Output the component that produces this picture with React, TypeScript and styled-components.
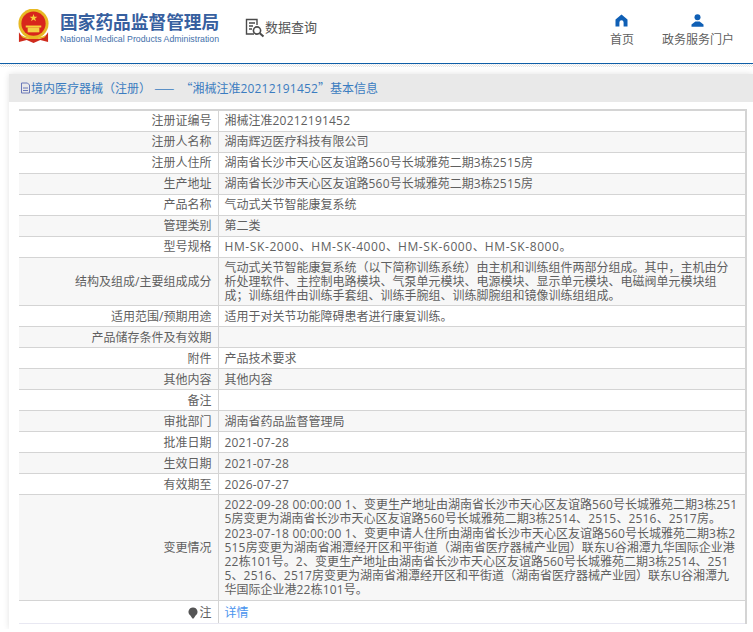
import React from "react";
import styled, { createGlobalStyle } from "styled-components";

const GlobalStyle = createGlobalStyle`
  html, body {
    margin: 0;
    padding: 0;
    background: #fff;
  }
  body {
    font-family: "Open Sans", "Noto Sans CJK SC", sans-serif;
    font-size: 12px;
    color: #5f5f5f;
    overflow: hidden;
  }
  * {
    box-sizing: border-box;
  }
`;

interface RowItem {
  label: string;
  value?: string;
  lines?: string[];
  wide?: boolean;
}

const rows: RowItem[] = [
  { label: "注册证编号", value: "湘械注准20212191452" },
  { label: "注册人名称", value: "湖南辉迈医疗科技有限公司" },
  { label: "注册人住所", value: "湖南省长沙市天心区友谊路560号长城雅苑二期3栋2515房" },
  { label: "生产地址", value: "湖南省长沙市天心区友谊路560号长城雅苑二期3栋2515房" },
  { label: "产品名称", value: "气动式关节智能康复系统" },
  { label: "管理类别", value: "第二类" },
  { label: "型号规格", value: "HM-SK-2000、HM-SK-4000、HM-SK-6000、HM-SK-8000。", wide: true },
  {
    label: "结构及组成/主要组成成分",
    lines: [
      "气动式关节智能康复系统（以下简称训练系统）由主机和训练组件两部分组成。其中，主机由分",
      "析处理软件、主控制电路模块、气泵单元模块、电源模块、显示单元模块、电磁阀单元模块组",
      "成；训练组件由训练手套组、训练手腕组、训练脚腕组和镜像训练组组成。",
    ],
  },
  { label: "适用范围/预期用途", value: "适用于对关节功能障碍患者进行康复训练。" },
  { label: "产品储存条件及有效期" },
  { label: "附件", value: "产品技术要求" },
  { label: "其他内容", value: "其他内容" },
  { label: "备注" },
  { label: "审批部门", value: "湖南省药品监督管理局" },
  { label: "批准日期", value: "2021-07-28" },
  { label: "生效日期", value: "2021-07-28" },
  { label: "有效期至", value: "2026-07-27" },
  {
    label: "变更情况",
    lines: [
      "2022-09-28 00:00:00 1、变更生产地址由湖南省长沙市天心区友谊路560号长城雅苑二期3栋251",
      "5房变更为湖南省长沙市天心区友谊路560号长城雅苑二期3栋2514、2515、2516、2517房。",
      "2023-07-18 00:00:00 1、变更申请人住所由湖南省长沙市天心区友谊路560号长城雅苑二期3栋2",
      "515房变更为湖南省湘潭经开区和平街道（湖南省医疗器械产业园）联东U谷湘潭九华国际企业港",
      "22栋101号。2、变更生产地址由湖南省长沙市天心区友谊路560号长城雅苑二期3栋2514、251",
      "5、2516、2517房变更为湖南省湘潭经开区和平街道（湖南省医疗器械产业园）联东U谷湘潭九",
      "华国际企业港22栋101号。",
    ],
  },
];

// latin runs come out a little narrow next to the cjk font, so they get their own spacing
function spaced(text: string, wide?: boolean) {
  return text.split(/([0-9A-Za-z:\- ]+)/).map((part, i) =>
    i % 2 === 1 ? (
      <Latin key={i} $wide={wide}>
        {part}
      </Latin>
    ) : (
      part
    )
  );
}

export default function App() {
  return (
    <>
      <GlobalStyle />
      <Header>
        <Brand>
          <Emblem viewBox="0 0 34 36">
            <circle cx="17" cy="15" r="15.5" fill="#e8b923" />
            <circle cx="17" cy="15" r="12.5" fill="#d8261c" />
            <polygon points="17,5 18,8 21,8 18.6,9.8 19.5,12.6 17,10.9 14.5,12.6 15.4,9.8 13,8 16,8" fill="#f6d33a" />
            <rect x="9" y="17" width="16" height="2" fill="#f6d33a" />
            <rect x="11" y="19" width="12" height="5" fill="#f3d046" />
            <path d="M2 24 C6 31 12 31 17 31 C22 31 28 31 32 24 L32 34 L24 32 L17 35 L10 32 L2 34 Z" fill="#cf2b1d" />
            <path d="M5 28 C9 31 25 31 29 28" stroke="#e8b923" strokeWidth="1.5" fill="none" />
          </Emblem>
          <BrandText>
            <BrandName>国家药品监督管理局</BrandName>
            <BrandSub>National Medical Products Administration</BrandSub>
          </BrandText>
        </Brand>
        <QueryLink>
          <svg width="20" height="20" viewBox="0 0 20 20" fill="none" stroke="#4a4a4a" strokeWidth="1.4">
            <path d="M9 16H1.5V1.5H12V7" />
            <path d="M4 5h6M4 8h4M4 11h3" />
            <circle cx="12" cy="12.5" r="3.6" strokeWidth="1.6" />
            <path d="M14.8 15.2L18.5 18.6" strokeWidth="2" />
          </svg>
          <span>数据查询</span>
        </QueryLink>
        <Nav>
          <NavItem>
            <svg width="13" height="13" viewBox="0 0 13 13" fill="#0f5fb5">
              <path d="M6.5 0.5L12.5 5.5V12.5H8.6V8.4a2.1 2.1 0 0 0-4.2 0V12.5H0.5V5.5Z" />
            </svg>
            首页
          </NavItem>
          <NavItem>
            <svg width="13" height="13" viewBox="0 0 13 13" fill="#0f5fb5">
              <circle cx="6.5" cy="3.2" r="3" />
              <path d="M0.5 12.8V10.4L4.4 7.6H8.6L12.5 10.4V12.8Z" />
            </svg>
            政务服务门户
          </NavItem>
        </Nav>
      </Header>
      <Strip />
      <Panel>
        <PanelTitle>
          <svg width="11" height="12" viewBox="0 0 11 12" fill="none" stroke="#6a78b8" strokeWidth="1">
            <path d="M1.5 1H7.5L9.5 3V11H1.5Z" />
            <path d="M3 6h5M3 8.5h5" />
          </svg>
          <span>
            境内医疗器械（注册） <TitleDash>——</TitleDash> <CjkPunct>“</CjkPunct>湘械注准
            <Latin>20212191452</Latin>
            <CjkPunct>”</CjkPunct>基本信息
          </span>
        </PanelTitle>
        <TableWrap>
          <InfoTable>
            <tbody>
              {rows.map((row, i) => (
                <tr key={i}>
                  <LabelCell $odd={i % 2 === 1}>{row.label}</LabelCell>
                  <ValueCell $odd={i % 2 === 1}>
                    {row.lines
                      ? row.lines.map((line, n) => <Line key={n}>{spaced(line)}</Line>)
                      : row.value && spaced(row.value, row.wide)}
                  </ValueCell>
                </tr>
              ))}
              <tr>
                <LastLabel>
                  <Bulb viewBox="0 0 10 12">
                    <path d="M5 0.5a4.4 4.4 0 0 1 2.6 8L5.6 11.5H4.4L2.4 8.5A4.4 4.4 0 0 1 5 0.5Z" fill="#555" />
                  </Bulb>
                  注
                </LastLabel>
                <LastValue>
                  <DetailLink>详情</DetailLink>
                </LastValue>
              </tr>
            </tbody>
          </InfoTable>
        </TableWrap>
      </Panel>
    </>
  );
}

const Header = styled.header`
  height: 64px;
  display: flex;
  align-items: flex-start;
  background: #fff;
  border-bottom: 1px solid #0f5fa8;
`;

const Brand = styled.div`
  display: flex;
  align-items: flex-start;
  gap: 10px;
  padding: 9px 0 0 17px;
  width: 245px;
`;

const Emblem = styled.svg`
  width: 33px;
  height: 35px;
  flex: none;
`;

const BrandText = styled.div`
  display: flex;
  flex-direction: column;
`;

const BrandName = styled.div`
  font-size: 17.7px;
  line-height: 24px;
  margin-top: 1px;
  font-weight: 700;
  color: #37609f;
  white-space: nowrap;
`;

const BrandSub = styled.div`
  font-family: "Liberation Sans", sans-serif;
  font-size: 8.75px;
  line-height: 12px;
  margin-top: -1px;
  color: #4470ab;
  white-space: nowrap;
`;

const QueryLink = styled.div`
  display: flex;
  align-items: flex-start;
  padding-top: 18px;
  font-size: 13px;
  line-height: 18px;
  color: #555;
  white-space: nowrap;
`;

const Nav = styled.nav`
  margin-left: auto;
  display: flex;
  gap: 28px;
  padding: 14px 19px 0 0;
`;

const NavItem = styled.div`
  display: flex;
  flex-direction: column;
  align-items: center;
  gap: 5px;
  line-height: 16px;
  color: #5f5f5f;
`;

const Strip = styled.div`
  height: 10px;
  background: linear-gradient(to bottom, transparent 3px, #fff 3px),
    repeating-conic-gradient(#e6e6e6 0 25%, #fff 0 50%) 0 0 / 2px 2px;
`;

const Panel = styled.section`
  margin: 0 0 0 9px;
  height: 555px;
  background: #fff;
  box-shadow: 0 0 6px rgba(0, 0, 0, 0.12);
`;

const PanelTitle = styled.div`
  height: 28px;
  display: flex;
  align-items: center;
  padding-left: 11px;
  background: #e9e9e9;
  color: #3b7cc0;
  font-size: 12px;
  white-space: nowrap;
`;

const CjkPunct = styled.span`
  font-family: "Noto Sans CJK SC", sans-serif;
`;

const TitleDash = styled(CjkPunct)`
  margin-right: 3px;
`;

const Latin = styled.span<{ $wide?: boolean }>`
  letter-spacing: ${(p) => (p.$wide ? "0.6px" : "0.2px")};
`;

const Line = styled.span`
  display: block;
  white-space: nowrap;
`;

const TableWrap = styled.div`
  padding: 7px 6px 0 10px;
`;

const InfoTable = styled.table`
  width: 100%;
  table-layout: fixed;
  border-collapse: collapse;
  border-top: 2px solid #d4d4d4;
  border-right: 2px solid #d4d4d4;
  line-height: 14.2px;
`;

const LabelCell = styled.td<{ $odd: boolean }>`
  width: 199px;
  padding: 3px 6px 2px 0;
  text-align: right;
  vertical-align: middle;
  background: ${(p) => (p.$odd ? "#f7f7f7" : "#fff")};
  border-bottom: 1px solid #d4d4d4;
  border-right: 1px solid #d4d4d4;
`;

const ValueCell = styled.td<{ $odd: boolean }>`
  padding: 3px 6px 2px 6px;
  vertical-align: middle;
  height: 21px;
  word-break: break-all;
  background: ${(p) => (p.$odd ? "#f7f7f7" : "#fff")};
  border-bottom: 1px solid #d4d4d4;
`;

const LastLabel = styled.td`
  padding: 5px 6px 1px 0;
  height: 23px;
  text-align: right;
  border-bottom: 1px solid #e8e8f2;
  border-right: 1px solid #d4d4d4;
`;

const LastValue = styled.td`
  padding: 5px 6px 1px;
  border-bottom: 1px solid #e8e8f2;
`;

const Bulb = styled.svg`
  width: 10px;
  height: 12px;
  vertical-align: -2px;
  margin-right: 1px;
`;

const DetailLink = styled.a`
  color: #4a94ee;
`;
